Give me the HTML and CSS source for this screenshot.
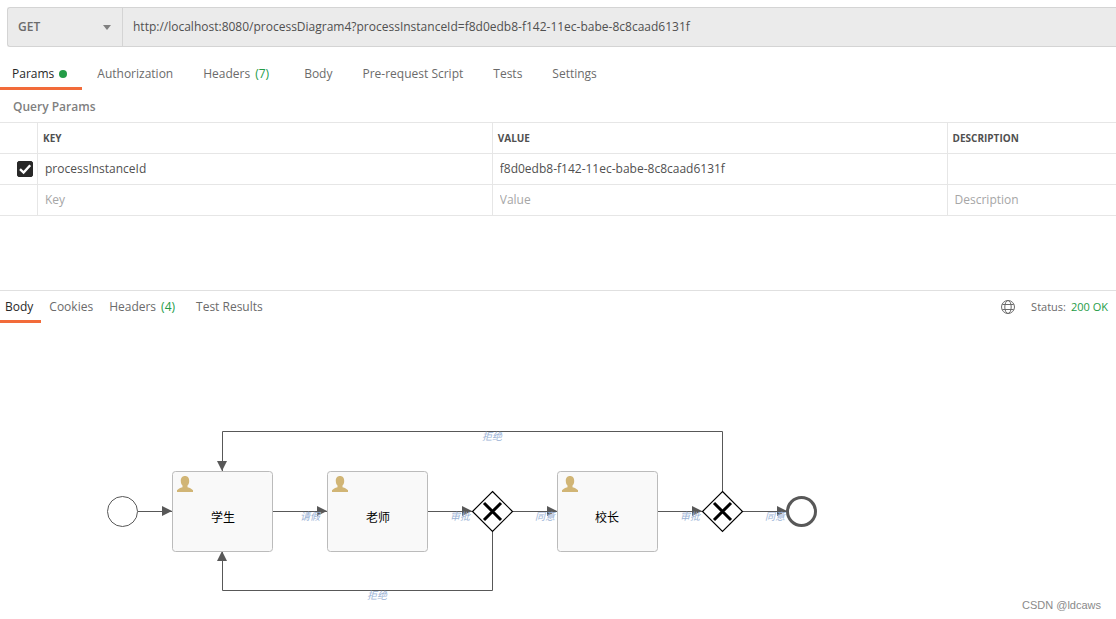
FILE: index.html
```html
<!DOCTYPE html>
<html lang="en">
<head>
<meta charset="utf-8">
<title>Process diagram request</title>
<link rel="stylesheet" href="styles.css">
</head>
<body>
<main class="app">
  <form class="request-bar">
    <div class="method">
      <select class="method-select" aria-label="Method">
        <option>GET</option>
        <option>POST</option>
      </select>
      <svg class="method-arrow" width="8" height="5" viewBox="0 0 8 5" aria-hidden="true"><path d="M0 0h8L4 5z" fill="#808080"/></svg>
    </div>
    <input class="url" type="text" aria-label="Request URL" value="http://localhost:8080/processDiagram4?processInstanceId=f8d0edb8-f142-11ec-babe-8c8caad6131f">
  </form>

  <nav class="tabs request-tabs">
    <button class="tab active" type="button">Params<span class="dot"></span></button>
    <button class="tab" type="button">Authorization</button>
    <button class="tab counted" type="button">Headers<span class="count">(7)</span></button>
    <button class="tab" type="button">Body</button>
    <button class="tab" type="button">Pre-request Script</button>
    <button class="tab" type="button">Tests</button>
    <button class="tab" type="button">Settings</button>
  </nav>

  <section class="params">
    <h2 class="params-title">Query Params</h2>
    <table class="params-table">
      <colgroup><col class="col-check"><col class="col-field"><col class="col-field"><col></colgroup>
      <thead>
        <tr><th></th><th scope="col">KEY</th><th scope="col">VALUE</th><th scope="col">DESCRIPTION</th></tr>
      </thead>
      <tbody>
        <tr>
          <td class="check-cell"><label class="check"><input type="checkbox" checked aria-label="Enable processInstanceId"><svg width="16" height="16" viewBox="0 0 16 16" aria-hidden="true"><path d="M3 8.2l3.6 3.4L13.2 4.3" fill="none" stroke="#fff" stroke-width="2.4"/></svg></label></td>
          <td><input class="cell" type="text" aria-label="Key" value="processInstanceId"></td>
          <td><input class="cell" type="text" aria-label="Value" value="f8d0edb8-f142-11ec-babe-8c8caad6131f"></td>
          <td><input class="cell" type="text" aria-label="Description"></td>
        </tr>
        <tr>
          <td></td>
          <td><input class="cell" type="text" aria-label="New key" placeholder="Key"></td>
          <td><input class="cell" type="text" aria-label="New value" placeholder="Value"></td>
          <td><input class="cell" type="text" aria-label="New description" placeholder="Description"></td>
        </tr>
      </tbody>
    </table>
  </section>

  <section class="response">
    <header class="response-head">
      <nav class="tabs response-tabs">
        <button class="tab active" type="button">Body</button>
        <button class="tab" type="button">Cookies</button>
        <button class="tab counted" type="button">Headers<span class="count">(4)</span></button>
        <button class="tab" type="button">Test Results</button>
      </nav>
      <div class="status">
        <svg width="14" height="14" viewBox="0 0 14 14" fill="none" stroke="#6b6b6b" aria-hidden="true"><circle cx="7" cy="7" r="6.5"/><ellipse cx="7" cy="7" rx="3.2" ry="6.5"/><path d="M1.3 4.5h11.4M1.3 9.5h11.4"/></svg>
        <span class="status-text">Status:<span class="status-code">200 OK</span></span>
      </div>
    </header>

    <div class="canvas">
      <svg class="diagram" width="712" height="194" viewBox="106 420 712 194" role="img" aria-label="Process diagram">
        <defs>
          <path id="user" d="M13 5c3 0 4.3 2.200 4.200 5 0 2-.7 3.500-1.700 4.600v1.600c2.400.7 4.600 1.800 5.500 3.100V21H5v-1.700c.9-1.300 3.100-2.400 5.500-3.100v-1.600C9.500 13.500 8.800 12 8.800 10c-.1-2.800 1.200-5 4.200-5z" fill="#d1b575"/>
          <g id="task">
            <rect x=".5" y=".5" width="100" height="80" rx="3" fill="#f9f9f9" stroke="#bbb"/>
            <use href="#user"/>
          </g>
          <g id="gateway">
            <path d="M0-20L20 0L0 20L-20 0z" fill="#fff" stroke="#000" stroke-width="1.2"/>
            <path d="M-8.5-8.5L8.5 8.5M8.5-8.5L-8.5 8.5" stroke="#000" stroke-width="3"/>
          </g>
          <path id="head" d="M-10-5V5L0 0z" fill="#585858"/>
        </defs>

        <g class="flow">
          <path d="M138 511.500H172M273 511.500H327M428 511.500H473M512 511.500H557M658 511.500H703M742 511.500H787"/>
          <path d="M722.5 492V431.500H222.500V471"/>
          <path d="M492.5 531V590.500H222.500V552"/>
        </g>
        <use href="#head" x="172" y="511"/>
        <use href="#head" x="327" y="511"/>
        <use href="#head" x="472" y="511"/>
        <use href="#head" x="557" y="511"/>
        <use href="#head" x="702" y="511"/>
        <use href="#head" x="787" y="511"/>
        <use href="#head" transform="translate(222 471) rotate(90)"/>
        <use href="#head" transform="translate(222 551) rotate(-90)"/>

        <circle cx="122.5" cy="511.5" r="15" fill="#fff" stroke="#585858"/>
        <circle cx="801.5" cy="511.5" r="14" fill="#fff" stroke="#585858" stroke-width="3"/>
        <use href="#task" x="172" y="471"/>
        <use href="#task" x="327" y="471"/>
        <use href="#task" x="557" y="471"/>
        <use href="#gateway" x="492.5" y="511.5"/>
        <use href="#gateway" x="722.5" y="511.5"/>

        <g class="task-label">
          <text x="223" y="522">学生</text>
          <text x="378" y="522">老师</text>
          <text x="607" y="522">校长</text>
        </g>
        <g class="flow-label">
          <text x="310" y="520">请假</text>
          <text x="460" y="520">审批</text>
          <text x="545" y="520">同意</text>
          <text x="690" y="520">审批</text>
          <text x="775" y="520">同意</text>
          <text x="492" y="440">拒绝</text>
          <text x="377" y="599">拒绝</text>
        </g>
      </svg>
    </div>
    <div class="watermark">CSDN @ldcaws</div>
  </section>
</main>
</body>
</html>
```
FILE: styles.css
```css
* {
  box-sizing: border-box;
}

body {
  margin: 0;
  background: #fff;
  color: #6b6b6b;
  font: 12px/16px "Open Sans", "Noto Sans CJK SC", sans-serif;
}

button,
input,
select {
  margin: 0;
  padding: 0;
  border: 0;
  border-radius: 0;
  background: none;
  color: inherit;
  font: inherit;
}

.app {
  display: flex;
  flex-direction: column;
  min-height: 100vh;
  overflow: hidden;
}

.request-bar {
  display: flex;
  height: 40px;
  margin: 7px 0 0 7px;
  border: 1px solid #d4d4d4;
  border-right: 0;
  border-radius: 3px 0 0 3px;
  background: #ebebeb;
}

.method {
  position: relative;
  flex: none;
  width: 115px;
  border-right: 1px solid #d4d4d4;
}

.method-select {
  width: 100%;
  height: 100%;
  padding-left: 10px;
  appearance: none;
  font-weight: 600;
}

.method-arrow {
  position: absolute;
  top: 17px;
  right: 11px;
  pointer-events: none;
}

.url {
  flex: 1;
  min-width: 0;
  padding-left: 10px;
  color: #505050;
}

.tabs {
  display: flex;
}

.tab {
  display: flex;
  align-items: center;
  padding: 0 15px;
  border-bottom: 3px solid transparent;
  white-space: nowrap;
}

.tab.active {
  border-bottom-color: #f26b3a;
  color: #282828;
}

.request-tabs {
  height: 43px;
  padding-top: 14px;
}

.request-tabs .tab.active {
  padding-left: 12px;
}

.tab.counted {
  margin-right: 5px;
}

.dot {
  width: 8px;
  height: 8px;
  margin-left: 5px;
  border-radius: 50%;
  background: #249c47;
}

.count {
  margin-left: 5px;
  color: #249c47;
}

.params-title {
  margin: 0;
  padding: 9px 13px 7px;
  color: #808080;
  font-size: 12px;
  font-weight: 600;
}

.params-table {
  width: 100%;
  border-collapse: separate;
  border-spacing: 0;
  border-top: 1px solid #e6e6e6;
  table-layout: fixed;
}

.col-check {
  width: 37px;
}

.col-field {
  width: 40.75%;
}

.params-table th,
.params-table td {
  height: 31px;
  padding: 0;
  border-bottom: 1px solid #e6e6e6;
}

.params-table th + th,
.params-table td + td {
  border-left: 1px solid #e6e6e6;
}

.params-table th {
  padding-left: 5px;
  color: #505050;
  font-size: 10px;
  font-weight: 700;
  text-align: left;
}

.cell {
  display: block;
  width: 100%;
  height: 30px;
  padding: 0 0 2px 7px;
  color: #505050;
}

.cell::placeholder {
  color: #a6a6a6;
  opacity: 1;
}

.check {
  display: grid;
  width: 16px;
  margin-left: 17px;
}

.check input,
.check svg {
  grid-area: 1 / 1;
}

.check input {
  width: 16px;
  height: 16px;
  border: 1px solid #808080;
  border-radius: 2px;
  appearance: none;
}

.check input:checked {
  border-color: #282828;
  background: #282828;
}

.check svg {
  pointer-events: none;
}

.response {
  position: relative;
  flex: 1;
  margin-top: 74px;
  border-top: 1px solid #e0e0e0;
}

.response-head {
  display: flex;
  justify-content: space-between;
  height: 32px;
}

.response-tabs .tab {
  padding: 3px 8px 0;
}

.response-tabs .tab.active {
  padding-left: 5px;
}

.status {
  display: flex;
  align-items: center;
  gap: 16px;
  padding-right: 8px;
  font-size: 11px;
}

.status-code {
  margin-left: 5px;
  color: #249c47;
}

.canvas {
  padding: 97px 0 0 106px;
}

.diagram {
  display: block;
}

.flow {
  fill: none;
  stroke: #585858;
}

.task-label,
.flow-label {
  font-family: "Noto Sans CJK SC", sans-serif;
  text-anchor: middle;
}

.task-label {
  fill: #000;
  font-size: 12px;
}

.flow-label {
  fill: #9bb3d6;
  font-size: 10px;
  font-style: italic;
}

.watermark {
  position: absolute;
  right: 15px;
  bottom: 6px;
  color: #8a8a8a;
  font: 11px/16px "Liberation Sans", sans-serif;
}
```
